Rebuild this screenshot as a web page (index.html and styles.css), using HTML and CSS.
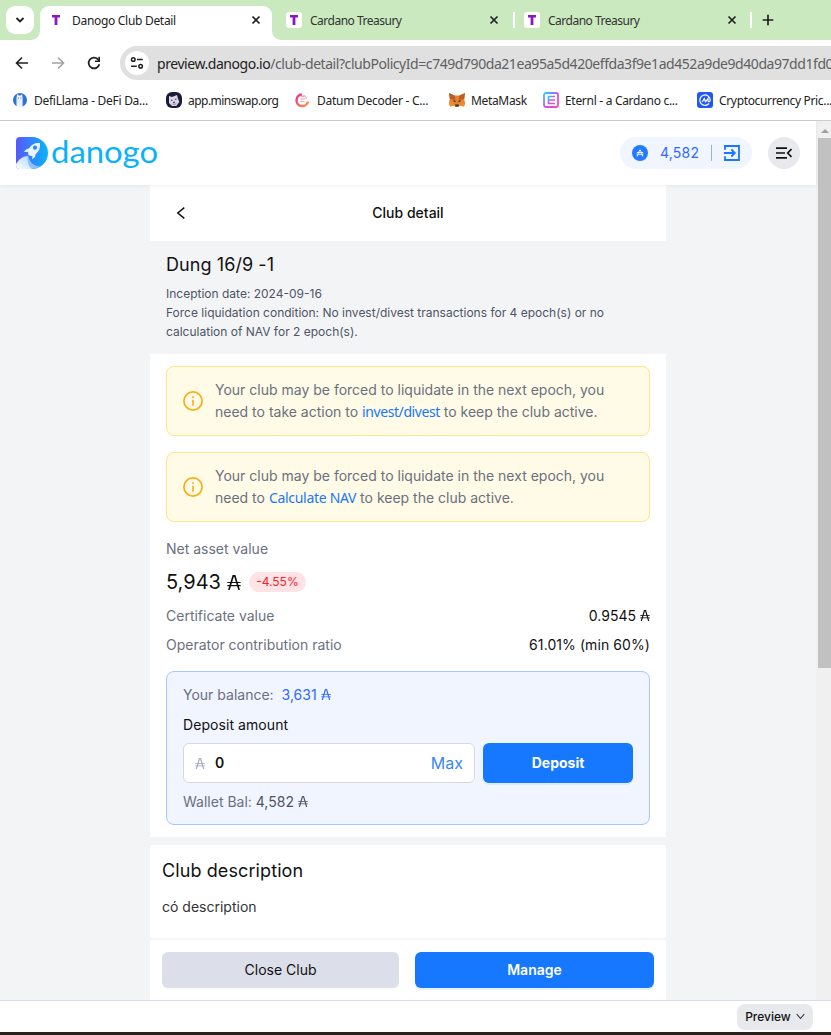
FILE: index.html
```html
<!DOCTYPE html>
<html lang="en">
<head>
<meta charset="utf-8">
<title>Danogo Club Detail</title>
<link rel="stylesheet" href="styles.css">
</head>
<body>
<svg class="defs" width="0" height="0">
  <defs>
    <linearGradient id="logo-g" x1="0" y1="0" x2="1" y2="0"><stop offset="0" stop-color="#5757f8"/><stop offset="1" stop-color="#08b5ff"/></linearGradient>
    <linearGradient id="smoke-g" x1="0" y1="1" x2="1" y2="0"><stop offset="0" stop-color="#fff"/><stop offset="1" stop-color="#a9d5ff"/></linearGradient>
    <linearGradient id="et-g" x1="0" y1="0" x2="1" y2="1"><stop offset="0" stop-color="#19d8f5"/><stop offset=".5" stop-color="#c94ff5"/><stop offset="1" stop-color="#ff4fa5"/></linearGradient>
    <linearGradient id="dd-g" x1="0" y1="0" x2="1" y2="1"><stop offset="0" stop-color="#f42b9c"/><stop offset="1" stop-color="#fa9a3c"/></linearGradient>
    <symbol id="x" viewBox="0 0 10 10"><path d="M1.500 1.500l7 7M8.500 1.500l-7 7" stroke="#202124" stroke-width="1.700" fill="none"/></symbol>
    <symbol id="t" viewBox="0 0 16 16"><path d="M4 3h8v2.500H9.400V13H6.600V5.500H4z" fill="#8b17c4"/></symbol>
    <symbol id="ada" viewBox="0 0 12 13" preserveAspectRatio="none"><path d="M1.600 13L5.300 .8h1.400L10.400 13" fill="none" stroke="currentColor" stroke-width="1.400"/><path d="M.3 6.500h11.400M.3 9.200h11.400" fill="none" stroke="currentColor" stroke-width=".95"/></symbol>
    <symbol id="info" viewBox="0 0 20 20"><circle cx="10" cy="10" r="9.100" fill="none" stroke="#faad14" stroke-width="1.700"/><path d="M10 8.700v6M10 5.200v1.800" stroke="#faad14" stroke-width="1.600"/></symbol>
  </defs>
</svg>

<div class="tabs">
  <div class="tab-search"><svg width="10" height="10" viewBox="0 0 10 10"><path d="M1.500 3L5 6.500 8.500 3" fill="none" stroke="#202124" stroke-width="1.900"/></svg></div>
  <div class="tab active"><svg class="fav" width="16" height="16"><use href="#t"/></svg><span>Danogo Club Detail</span><svg class="close" width="10" height="10"><use href="#x"/></svg></div>
  <div class="tab"><svg class="fav" width="16" height="16"><use href="#t"/></svg><span>Cardano Treasury</span><svg class="close" width="10" height="10"><use href="#x"/></svg></div>
  <i class="sep"></i>
  <div class="tab last"><svg class="fav" width="16" height="16"><use href="#t"/></svg><span>Cardano Treasury</span><svg class="close" width="10" height="10"><use href="#x"/></svg></div>
  <i class="sep"></i>
  <svg class="plus" width="12" height="12" viewBox="0 0 12 12"><path d="M6 .7v10.600M.7 6h10.600" stroke="#202124" stroke-width="1.700"/></svg>
</div>

<div class="toolbar">
  <div class="nav">
    <svg width="14" height="14" viewBox="0 0 14 14"><path d="M13 7H1.800M7 1.500L1.500 7 7 12.500" fill="none" stroke="#202124" stroke-width="1.600"/></svg>
    <svg width="14" height="14" viewBox="0 0 14 14"><path d="M1 7h11.200M7 1.500L12.500 7 7 12.500" fill="none" stroke="#a0a2a4" stroke-width="1.600"/></svg>
    <svg width="14" height="14" viewBox="0 0 14 14"><path d="M12.300 8.200A5.400 5.400 0 1 1 11 3.300L12.700 5" fill="none" stroke="#202124" stroke-width="1.800"/><path d="M13 .8v5.200H7.900V4.400h3.500V.8z" fill="#202124"/></svg>
  </div>
  <div class="omnibox">
    <div class="site"><svg width="14" height="14" viewBox="0 0 14 14"><g fill="none" stroke="#202124" stroke-width="1.500"><circle cx="3.300" cy="3.500" r="1.800"/><path d="M7 3.500h5.800M1 10.200h5.800"/><circle cx="10.600" cy="10.200" r="1.800"/></g></svg></div>
    <span class="url"><b>preview.danogo.io</b>/club-detail?clubPolicyId=c749d790da21ea95a5d420effda3f9e1ad452a9de9d40da97dd1fd0</span>
  </div>
</div>

<div class="bookmarks">
  <div class="bm bm1"><svg width="16" height="16" viewBox="0 0 16 16"><circle cx="8" cy="8" r="7" fill="#2f72d8"/><path d="M4.500 15V6l.6-4 1.500 1.500h2L10 2l.6 4v9z" fill="#eaf4ff"/><path d="M6 6h.8M8.500 6h.8" stroke="#28539c"/></svg><span>DefiLlama - DeFi Da...</span></div>
  <div class="bm bm2"><svg width="16" height="16" viewBox="0 0 16 16"><rect width="16" height="16" rx="6" fill="#181c38"/><path d="M3 4l3 1 5-2 .8 3 1.500 4-3 4H6L3 11z" fill="#ddd5e6"/><path d="M5 8l1.500.5M9 7.500l1.500-.5M7 10.500l2-.3" stroke="#4b4562" stroke-width="1.200"/><path d="M5 12l6-1-2 2.500z" fill="#b997bd"/></svg><span>app.minswap.org</span></div>
  <div class="bm bm3"><svg width="16" height="16" viewBox="0 0 16 16"><path d="M7 2.500A5.800 5.800 0 1 0 13 9.500" fill="none" stroke="url(#dd-g)" stroke-width="2.500"/><path d="M5.500 4.500h4M5 7h5.500M5 9.500h4.500M8 3l2.500 1.200 1 3" fill="none" stroke="#f7a3b0" stroke-width="1"/></svg><span>Datum Decoder - C...</span></div>
  <div class="bm bm4"><svg width="16" height="16" viewBox="0 0 16 16"><path d="M0 1l5.500 2.500h5L16 1l-.8 6 .8 4-1 3.500-4-1L9.500 15h-3L5 13.500l-4 1L0 11l.8-4z" fill="#e8832c"/><path d="M0 1l5.500 2.500L6.500 8 .8 7zM16 1l-5.500 2.500L9.500 8l5.700-1z" fill="#b5602a"/><path d="M1 14.500L5 13.500 4 10 0 11zM15 14.500l-4-1 1-3.500 4 1z" fill="#f08a34"/><path d="M4.500 8.500l2 1.200M11.500 8.500l-2 1.200" stroke="#303d4c" stroke-width="1.300"/><path d="M6 12.500h4l-.7 2H6.700z" fill="#342f35"/></svg><span>MetaMask</span></div>
  <div class="bm bm5"><svg width="16" height="16" viewBox="0 0 16 16"><rect x="1" y="1" width="14" height="14" rx="2" fill="#fff" stroke="url(#et-g)" stroke-width="1.800"/><path d="M12 4.500H5.500v7H12M5.500 8H12" fill="none" stroke="url(#et-g)" stroke-width="1.700"/></svg><span>Eternl - a Cardano c...</span></div>
  <div class="bm bm6"><svg width="16" height="16" viewBox="0 0 16 16"><rect width="16" height="16" rx="3" fill="#2357f5"/><path d="M12 11.500A5.200 5.200 0 1 1 13.200 8c0 2-2.200 2.100-2.200.2V6.600L8.500 9.700 7.300 6.500 5.200 10" fill="none" stroke="#fff" stroke-width="1.200"/></svg><span>Cryptocurrency Pric...</span></div>
</div>

<div class="viewport">
  <div class="page">
    <header class="site-header">
      <div class="brand">
        <svg width="32" height="32" viewBox="0 0 32 32"><path d="M4 0h12a16 16 0 0 1 0 32H4a4 4 0 0 1-4-4V4a4 4 0 0 1 4-4z" fill="url(#logo-g)"/><path d="M0 27c3-5 7-8 12-8 0 6 1 10 5 13H4a4 4 0 0 1-4-4z" fill="url(#smoke-g)"/><path d="M12 19c2 7 7 11 12 10-2 2-5 3-8 3-4-3-5-8-4-13z" fill="#8cc4fa"/><path d="M24 6c-5-.5-9 1.500-11 5.500-2 .2-4 1.500-5 3.500l4-.3.5 3.500 4 1-.5 3c3-1.500 3.500-3 3.500-5C23 14.500 24.500 11 24 6z" fill="#e8f5ff"/><circle cx="19" cy="10.700" r="2.100" fill="#2e86fb"/></svg>
        <svg class="word" width="108" height="40"><text x="-1" y="30" textLength="107" lengthAdjust="spacingAndGlyphs">danogo</text></svg>
      </div>
      <div class="wallet">
        <svg width="16" height="16" viewBox="0 0 16 16"><circle cx="8" cy="8" r="8" fill="#237cff"/><path d="M5.200 11.500L7.600 5h.8l2.400 6.500M4.800 7.500h6.400M4.600 9.300h6.800" fill="none" stroke="#fff" stroke-width=".9"/></svg>
        <span class="wallet-n">4,582</span><i></i>
        <svg width="16" height="16" viewBox="0 0 16 16"><path d="M1 4.800V1h14v14H1v-3.800" fill="none" stroke="#1677ff" stroke-width="1.800"/><path d="M0 8h10.500M7.300 4.500L10.800 8l-3.500 3.500" fill="none" stroke="#1677ff" stroke-width="1.800"/></svg>
      </div>
      <div class="menu"><svg width="16" height="12" viewBox="0 0 16 12"><path d="M0 1.200h11M0 6h9M0 10.800h11M15.500 2L11.700 6l3.800 4" fill="none" stroke="#111" stroke-width="1.700"/></svg></div>
    </header>
    <main class="column">
      <div class="title"><svg width="9" height="12" viewBox="0 0 9 12"><path d="M8.300.6L1.800 6l6.500 5.400" fill="none" stroke="#111" stroke-width="1.500"/></svg><h1>Club detail</h1></div>
      <section class="summary">
        <h2>Dung 16/9 -1</h2>
        <p>Inception date: 2024-09-16<br>Force liquidation condition: No invest/divest transactions for 4 epoch(s) or no<br>calculation of NAV for 2 epoch(s).</p>
      </section>
      <section class="body">
        <div class="alert"><svg width="20" height="20"><use href="#info"/></svg><p>Your club may be forced to liquidate in the next epoch, you<br>need to take action to <a class="inv">invest/divest</a> to keep the club active.</p></div>
        <div class="alert"><svg width="20" height="20"><use href="#info"/></svg><p>Your club may be forced to liquidate in the next epoch, you<br>need to <a>Calculate NAV</a> to keep the club active.</p></div>
        <div class="label nav-label">Net asset value</div>
        <div class="nav-value"><strong>5,943</strong><svg width="14" height="15"><use href="#ada"/></svg><em>-4.55%</em></div>
        <div class="row r1"><span class="label">Certificate value</span><span class="val">0.9545<svg class="ada" width="10" height="11"><use href="#ada"/></svg></span></div>
        <div class="row r2"><span class="label">Operator contribution ratio</span><span class="val pct">61.01% (min 60%)</span></div>
        <div class="deposit">
          <div class="balance"><span class="label">Your balance:</span><span class="amount">3,631<svg class="ada" width="10" height="11"><use href="#ada"/></svg></span></div>
          <div class="dep-title">Deposit amount</div>
          <div class="form">
            <div class="input"><svg width="10" height="11"><use href="#ada"/></svg><span class="zero">0</span><span class="max">Max</span></div>
            <div class="btn primary dep-btn">Deposit</div>
          </div>
          <div class="wallet-bal">Wallet Bal: <span>4,582<svg class="ada" width="10" height="11"><use href="#ada"/></svg></span></div>
        </div>
      </section>
      <section class="desc"><h2>Club description</h2><p>có description</p></section>
      <footer class="actions"><div class="btn close-btn">Close Club</div><div class="btn primary manage">Manage</div></footer>
    </main>
  </div>
  <div class="scroll"><svg width="8" height="4" viewBox="0 0 8 4"><path d="M0 4l4-4 4 4z" fill="#a0a0a0"/></svg><div class="thumb"></div></div>
</div>
<div class="devbar"><div class="preview">Preview<svg width="9" height="7" viewBox="0 0 9 7"><path d="M.7 1l3.800 4.500L8.300 1" fill="none" stroke="#333" stroke-width="1.100"/></svg></div></div>
<div class="edge"></div>
</body>
</html>
```
FILE: styles.css
```css
* { box-sizing: border-box; }
body { margin: 0; width: 831px; height: 1035px; overflow: hidden; background: #fff; font-family: Inter, "Liberation Sans", sans-serif; color: #111; display: flex; flex-direction: column; }
h1, h2, p { margin: 0; font-weight: 400; }
svg { display: block; flex: none; }
.defs { position: absolute; }

.tabs, .toolbar, .bookmarks { font-family: "Noto Sans", sans-serif; flex: none; display: flex; align-items: center; white-space: nowrap; }
.tabs { height: 40px; background: #cae9bf; padding: 6px 0 0 6px; align-items: stretch; }
.tab-search { width: 28px; height: 28px; border-radius: 9px; background: #fff; display: grid; place-items: center; margin-right: 6px; }
.tab { width: 241px; display: flex; align-items: center; padding: 0 14px 6px 14px; font-size: 12px; letter-spacing: -0.5px; color: #333; }
.tab.active { width: 232px; background: #fff; border-radius: 9px 9px 0 0; padding: 0 11px 6px 8px; color: #222; position: relative; letter-spacing: -0.3px; }
.tab.active::before, .tab.active::after { content: ""; position: absolute; bottom: 0; width: 9px; height: 9px; }
.tab.active::before { left: -9px; background: radial-gradient(circle at 0 0, #cae9bf 8.500px, #fff 9px); }
.tab.active::after { right: -9px; background: radial-gradient(circle at 100% 0, #cae9bf 8.500px, #fff 9px); }
.tab.last { width: 236px; padding-left: 9px; padding-right: 14px; }
.fav { background: #fff; border-radius: 3px; margin-right: 8px; }
.close { margin-left: auto; }
.sep { width: 2px; height: 16px; background: #fff; margin-top: 6px; flex: none; }
.tab.last + .sep { margin-left: -1px; }
.plus { margin: 8px 0 0 10px; }

.toolbar { height: 46px; }
.nav { width: 120px; height: 34px; display: flex; align-items: center; gap: 22px; padding-left: 15px; }
.omnibox { height: 34px; flex: 1; min-width: 0; overflow: hidden; background: #e0e0e0; border-radius: 17px 0 0 17px; display: flex; align-items: center; padding-left: 5px; }
.site { width: 24px; height: 24px; border-radius: 50%; background: #fff; display: grid; place-items: center; margin-right: 8px; flex: none; }
.url { font-size: 14px; color: #5f6163; letter-spacing: -0.44px; }
.url b { font-weight: 400; color: #222; }
.bookmarks { height: 35px; padding: 0 0 6px 12px; border-bottom: 1px solid #ccc; font-size: 12px; color: #222; }
.bm { display: flex; align-items: center; gap: 6px; flex: none; letter-spacing: -0.34px; }
.bm1 { width: 154px; letter-spacing: -0.28px; }
.bm2 { width: 129px; letter-spacing: -0.53px; }
.bm3 { width: 154px; letter-spacing: -0.27px; }
.bm4 { width: 94px; }
.bm5 { width: 154px; letter-spacing: -0.3px; }

.viewport { height: 879px; flex: none; display: flex; background: #f3f4f6; }
.page { width: 816px; flex: none; }
.site-header { height: 64px; background: #fff; box-shadow: 0 1px 4px rgba(0,0,0,.06); display: flex; align-items: center; padding: 0 16px; position: relative; }
.brand { display: flex; align-items: center; gap: 4px; margin-right: auto; }
.word { overflow: visible; }
.word text { font: 31px Lato, sans-serif; fill: #08b2ff; }
.wallet { width: 132px; height: 32px; border-radius: 16px; background: #f0f5ff; color: #2f6bff; display: flex; align-items: center; padding-left: 12px; font-size: 14px; margin-right: 16px; }
.wallet-n { margin-left: 12px; width: 51px; letter-spacing: 0.2px; padding-bottom: 1px; }
.wallet i { width: 1px; height: 16px; background: #9eadd6; margin-right: 12px; }
.menu { width: 32px; height: 32px; border-radius: 50%; background: #e8e9ec; display: grid; place-items: center; }

.column { width: 516px; margin-left: 150px; font-size: 14px; }
.title { height: 56px; background: #fff; display: grid; grid-template-columns: 1fr auto 1fr; align-items: center; padding: 0 26px; }
.title h1 { font-size: 14px; font-weight: 500; padding-bottom: 2px; }
.summary { height: 113px; padding: 13px 16px 0; }
.summary h2 { font-size: 18px; line-height: 22px; letter-spacing: 0.08px; }
.summary p { margin-top: 8px; font-size: 12px; line-height: 19px; color: #4e5466; white-space: nowrap; }
.body { height: 483px; background: #fff; padding: 12px 16px 0; }
.alert { height: 70px; border: 1px solid #ffe58f; border-radius: 8px; background: #fffbe6; display: flex; align-items: center; padding-left: 16px; gap: 12px; margin-bottom: 16px; color: #6b7080; line-height: 22px; white-space: nowrap; }
.alert a { color: #1677ff; font-family: "Noto Sans", sans-serif; line-height: 1; letter-spacing: -0.3px; }
.alert .inv { letter-spacing: -0.42px; }
.label { color: #6b7080; }
.nav-label { height: 22px; line-height: 22px; }
.nav-value { height: 28px; margin-top: 8px; display: flex; align-items: center; }
.nav-value strong { font-weight: 400; font-size: 20px; margin-right: 6px; }
.nav-value em { margin-left: 8px; width: 57px; height: 20px; border-radius: 10px; background: #ffe3e5; color: #f5222d; font-size: 12px; line-height: 20px; font-style: normal; text-align: center; }
.row { height: 22px; line-height: 22px; display: flex; justify-content: space-between; margin-top: 7px; }
.row.r1 { margin-top: 9px; }
.pct { letter-spacing: 0.08px; }
.ada { display: inline-block; margin-left: 4px; }
.deposit { height: 154px; margin-top: 15px; border: 1px solid #a6c8ff; border-radius: 8px; background: #f0f5ff; padding: 12px 16px; }
.balance { height: 22px; line-height: 22px; display: flex; gap: 8px; }
.amount { color: #2f6bff; }
.dep-title { height: 22px; line-height: 22px; margin-top: 8px; letter-spacing: 0.07px; }
.form { display: flex; gap: 8px; margin-top: 7px; }
.input { width: 292px; height: 40px; border: 1px solid #d9d9d9; border-radius: 6px; background: #fff; display: flex; align-items: center; padding: 0 11px; color: #a5a9bc; }
.zero { font-weight: 600; color: #111; margin-left: 10px; padding-bottom: 1px; }
.max { color: #3b86f7; font-size: 16px; margin-left: auto; }
.btn { border-radius: 6px; display: grid; place-items: center; padding-bottom: 2px; box-shadow: 0 2px 0 rgba(0,0,0,.02); }
.primary { background: #1677ff; color: #fff; font-weight: 600; box-shadow: 0 2px 0 rgba(5,145,255,.1); }
.dep-btn { width: 150px; height: 40px; font-weight: 700; }
.wallet-bal { margin-top: 8px; height: 22px; line-height: 22px; color: #6b7080; }
.wallet-bal span { color: #4e5466; }
.desc { height: 93px; margin-top: 8px; background: #fff; padding: 14px 12px; }
.desc h2 { font-size: 18px; line-height: 24px; letter-spacing: 0.1px; }
.desc p { margin-top: 13px; line-height: 22px; color: #333; }
.actions { height: 62px; border-top: 2px solid #f5f5f6; background: #fff; display: flex; gap: 16px; padding: 12px; }
.close-btn { width: 237px; height: 36px; background: #dcdee9; }
.manage { width: 239px; height: 36px; }
.scroll { width: 15px; background: #f0f0f0; padding-left: 2px; }
.scroll svg { margin: 8px 0 5px 3px; }
.thumb { width: 13px; height: 530px; background: #c1c1c1; }
.devbar { height: 32px; flex: none; border-top: 1px solid #d9dbe8; display: flex; justify-content: flex-end; padding: 3px 18px 0 0; }
.preview { width: 76px; height: 26px; border-radius: 8px; background: #e8e9ec; font-size: 12px; font-weight: 500; display: flex; align-items: center; justify-content: center; gap: 5px; padding-bottom: 1px; }
.edge { height: 3px; flex: none; background: #2c2119; }
```
